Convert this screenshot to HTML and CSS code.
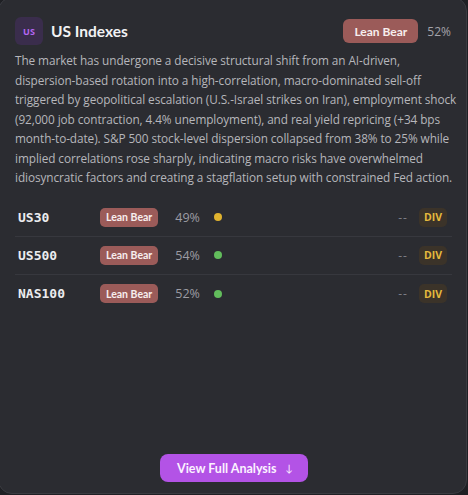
FILE: index.html
```html
<!DOCTYPE html>
<html>
<head>
<meta charset="utf-8">
<link rel="stylesheet" href="styles.css">
</head>
<body>
<div class="card">
  <div class="header">
    <div class="logo">US</div>
    <div class="title">US Indexes</div>
    <div class="header-right">
      <span class="bias">Lean Bear</span>
      <span class="conf">52%</span>
    </div>
  </div>
  <p class="summary">The market has undergone a decisive structural shift from an AI-driven,<br>dispersion-based rotation into a high-correlation, macro-dominated sell-off<br>triggered by geopolitical escalation (U.S.-Israel strikes on Iran), employment shock<br>(92,000 job contraction, 4.4% unemployment), and real yield repricing (+34 bps<br>month-to-date). S&amp;P 500 stock-level dispersion collapsed from 38% to 25% while<br>implied correlations rose sharply, indicating macro risks have overwhelmed<br>idiosyncratic factors and creating a stagflation setup with constrained Fed action.</p>
  <div class="rows">
    <div class="row">
      <span class="ticker">US30</span>
      <span class="bias small">Lean Bear</span>
      <span class="pct">49%</span>
      <span class="dot yellow"></span>
      <span class="dash">--</span>
      <span class="div-tag">DIV</span>
    </div>
    <div class="row">
      <span class="ticker">US500</span>
      <span class="bias small">Lean Bear</span>
      <span class="pct">54%</span>
      <span class="dot green"></span>
      <span class="dash">--</span>
      <span class="div-tag">DIV</span>
    </div>
    <div class="row">
      <span class="ticker">NAS100</span>
      <span class="bias small">Lean Bear</span>
      <span class="pct">52%</span>
      <span class="dot green"></span>
      <span class="dash">--</span>
      <span class="div-tag">DIV</span>
    </div>
  </div>
  <div class="footer">
    <button class="cta">View Full Analysis <span class="arrow">↓</span></button>
  </div>
</div>
</body>
</html>
```
FILE: styles.css
```css
* { box-sizing: border-box; }
html, body { margin: 0; padding: 0; }
body {
  background: #1f2024;
  width: 468px;
  height: 495px;
  overflow: hidden;
  font-family: "Open Sans", "Noto Sans", sans-serif;
}
.card {
  margin: -3px 1px 0 -2px;
  width: 469px;
  height: 497px;
  background: #2b2c31;
  border: 1px solid #3a3b41;
  border-radius: 14px;
  padding: 19px 13px 11px 16px;
  display: flex;
  flex-direction: column;
}
.header {
  display: flex;
  align-items: center;
  height: 28px;
  padding-right: 2px;
}
.logo {
  width: 28px;
  height: 28px;
  border-radius: 6px;
  background: #3a2d4c;
  color: #b466f2;
  font-size: 9px;
  font-weight: 700;
  display: flex;
  align-items: center;
  justify-content: center;
  font-family: "Open Sans", sans-serif;
}
.title {
  margin-left: 8px;
  color: #f2f2f4;
  font-size: 15.5px;
  font-weight: 700;
  font-family: "Lato", sans-serif;
}
.header-right {
  margin-left: auto;
  display: flex;
  align-items: center;
  gap: 9px;
}
.bias {
  background: #9b5b59;
  color: #f7eeee;
  font-family: "Lato", sans-serif;
  font-weight: 700;
  font-size: 12px;
  height: 24px;
  padding: 0 11px;
  border-radius: 6px;
  display: inline-flex;
  align-items: center;
}
.conf {
  color: #a3a3aa;
  font-size: 12px;
  font-family: "Open Sans", sans-serif;
}
.summary {
  margin: 6px 0 0 0;
  color: #b6b6bb;
  font-family: "Open Sans", sans-serif;
  font-size: 11.8px;
  letter-spacing: -0.08px;
  line-height: 19.5px;
  white-space: nowrap;
}
.rows {
  margin-top: 11px;
  margin-right: 1px;
}
.row {
  display: flex;
  align-items: center;
  height: 38px;
  padding: 0 5px 0 3px;
  border-bottom: 1px solid #37383e;
}
.row:last-child { border-bottom: none; }
.ticker {
  width: 82px;
  font-family: "DejaVu Sans Mono", monospace;
  font-weight: 700;
  font-size: 13px;
  color: #ececef;
}
.bias.small {
  height: 19px;
  font-size: 10.5px;
  padding: 0 6px;
  border-radius: 5px;
}
.pct {
  margin-left: 17px;
  width: 39px;
  color: #9c9ca4;
  font-size: 12.5px;
  font-family: "Open Sans", sans-serif;
}
.dot {
  width: 8px;
  height: 8px;
  border-radius: 50%;
}
.dot.yellow { background: #e0b32f; }
.dot.green { background: #62bd5c; }
.dash {
  margin-left: auto;
  color: #7e7e86;
  font-size: 12px;
  letter-spacing: 1px;
  font-family: "Open Sans", sans-serif;
}
.div-tag {
  margin-left: 11px;
  height: 19px;
  padding: 0 5px;
  border-radius: 5px;
  background: #3b3329;
  color: #e5ba3d;
  font-weight: 700;
  font-size: 10.5px;
  display: inline-flex;
  align-items: center;
  font-family: "Open Sans", sans-serif;
}
.footer {
  margin-top: auto;
  display: flex;
  justify-content: center;
}
.cta {
  border: none;
  background: #b353e6;
  color: #fbf2ff;
  height: 28px;
  padding: 0 15px 0 17px;
  border-radius: 8px;
  font-family: "Lato", sans-serif;
  font-size: 12.5px;
  font-weight: 700;
  display: inline-flex;
  align-items: center;
  gap: 9px;
}
.arrow { font-size: 10px; font-weight: 400; }
```
